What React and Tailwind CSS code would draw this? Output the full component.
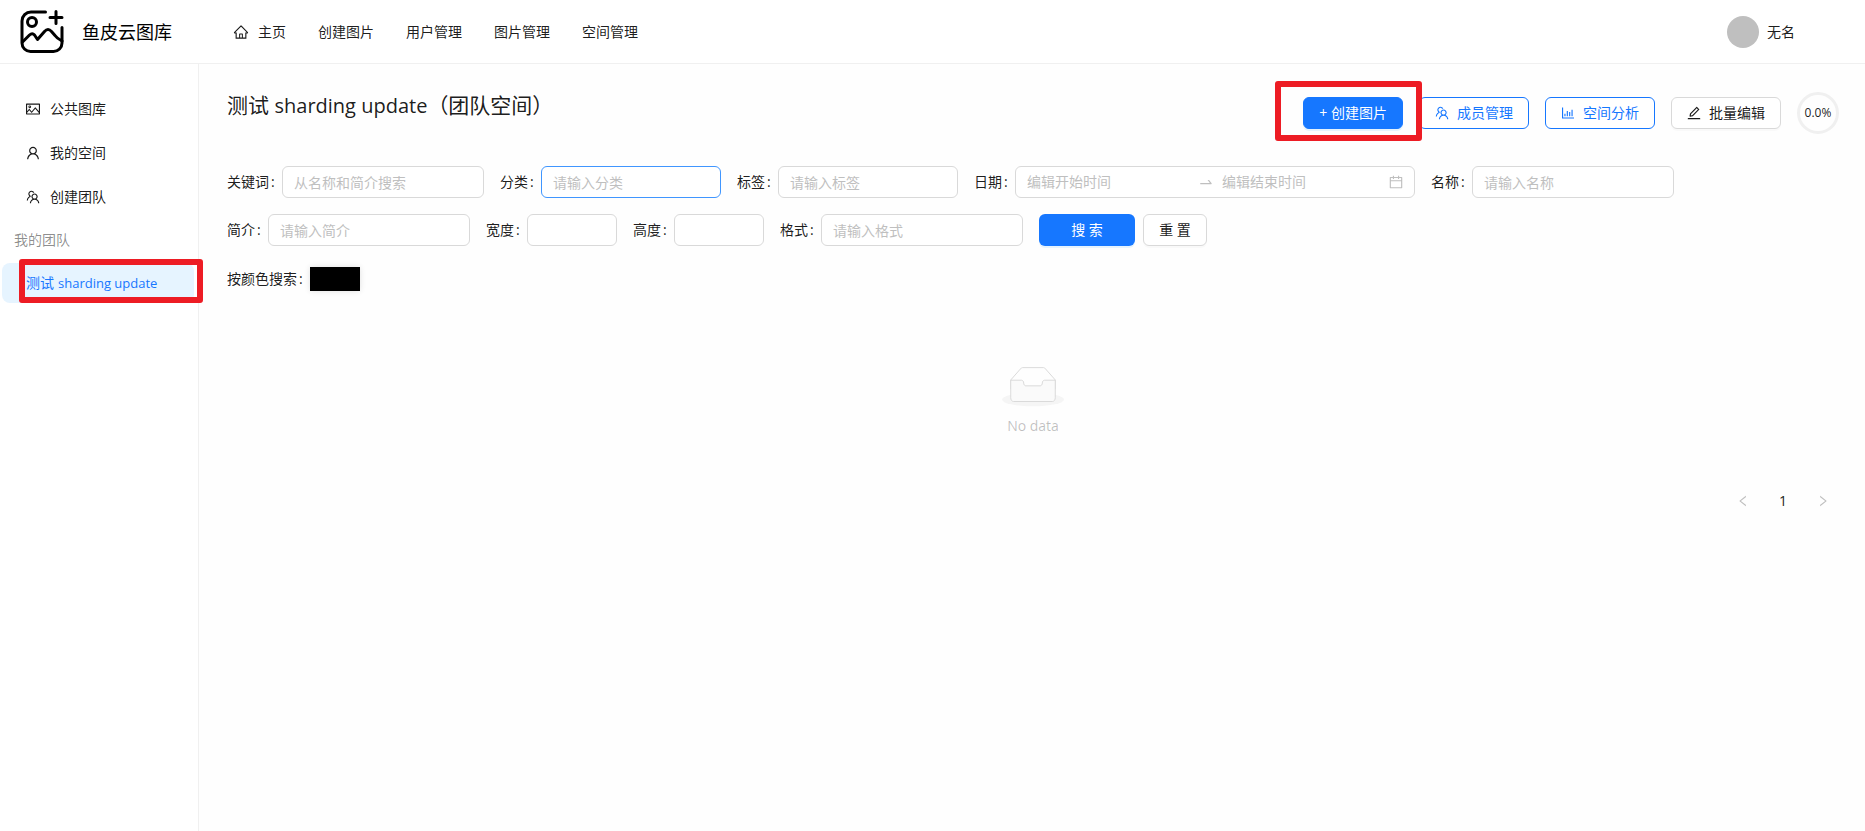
import React, { useState } from 'react';
import {
  AiOutlineBarChart,
  AiOutlineCalendar,
  AiOutlineEdit,
  AiOutlineHome,
  AiOutlineLeft,
  AiOutlinePicture,
  AiOutlineRight,
  AiOutlineSwapRight,
  AiOutlineTeam,
  AiOutlineUser,
} from 'react-icons/ai';

const NAV_ITEMS = ['创建图片', '用户管理', '图片管理', '空间管理'];

const SIDE_ITEMS = [
  { label: '公共图库', icon: AiOutlinePicture },
  { label: '我的空间', icon: AiOutlineUser },
  { label: '创建团队', icon: AiOutlineTeam },
];

const INPUT =
  'h-8 rounded-md border bg-white px-[11px] text-sm text-black/90 outline-none placeholder:text-[#bfbfbf]';

const ICON = '-mx-px size-4 shrink-0';

// ─── Логотип ──────────────────────────────────────────────────────────────────
function Logo() {
  return (
    <svg className="size-11" viewBox="0 0 44 44" fill="none" stroke="#000" strokeWidth="3" strokeLinecap="round" strokeLinejoin="round">
      <path d="M25.500 2H11A9 9 0 0 0 2 11V33A8.500 8.500 0 0 0 10.500 41.500H33.500A8.500 8.500 0 0 0 42 33V17.500" />
      <circle cx="12" cy="12" r="4.500" />
      <path d="M36 1.500v12M30 7.500h12" />
      <path d="M2.500 32l7-7q2.800-2.500 5 0l3 4.500 7-8q3.500-4 7 0l3.500 4q2 3 7 5.500" />
    </svg>
  );
}

// ─── Красная рамка-выделение ──────────────────────────────────────────────────
function Mark({ className }) {
  return <span className={`pointer-events-none absolute z-10 rounded-[3px] border-[6px] border-[#ed1c24] ${className}`} />;
}

// ─── Поле формы ───────────────────────────────────────────────────────────────
function Field({ id, label, children }) {
  return (
    <div className="flex items-center">
      <label htmlFor={id} className="flex">
        {label}
        <span className="ml-[2px] w-[11px]">:</span>
      </label>
      {children}
    </div>
  );
}

function TextField({ id, label, placeholder, width = 'w-[202px]', active }) {
  return (
    <Field id={id} label={label}>
      <input
        id={id}
        type="text"
        placeholder={placeholder}
        className={`${INPUT} ${width} ${active ? 'border-[#4096ff]' : 'border-[#d9d9d9]'}`}
      />
    </Field>
  );
}

function Header() {
  return (
    <header className="flex h-16 items-center border-b border-[#f0f0f0] bg-white pl-5 pr-[70px]">
      <a href="#home" className="flex w-[198px] items-center gap-[18px]">
        <Logo />
        <span className="text-lg text-black">鱼皮云图库</span>
      </a>
      <nav className="flex flex-1">
        <a href="#home" className="flex items-center gap-[10px] px-4">
          <AiOutlineHome className={ICON} /> 主页
        </a>
        {NAV_ITEMS.map((item) => (
          <a key={item} href="#nav" className="px-4">{item}</a>
        ))}
      </nav>
      <a href="#user" className="flex items-center gap-2">
        <span className="size-8 rounded-full bg-[#bfbfbf]" />
        无名
      </a>
    </header>
  );
}

function Sidebar() {
  return (
    <aside className="w-[199px] shrink-0 border-r border-[#f0f0f0] bg-white pt-[25px]">
      <nav className="flex flex-col gap-1 pl-[2px] pr-1">
        {SIDE_ITEMS.map(({ label, icon: Icon }) => (
          <a key={label} href="#side" className="flex h-10 items-center gap-[10px] rounded-lg px-6">
            <Icon className={ICON} /> {label}
          </a>
        ))}
        <p className="px-3 py-2 leading-[22px] text-black/45">我的团队</p>
        <a href="#team" className="relative flex h-10 items-center gap-1 rounded-lg bg-[#e6f4ff] px-6 text-[#1677ff]">
          测试 <span className="text-[13px]">sharding update</span>
          <Mark className="-right-[9px] -top-1 bottom-0 left-[17px]" />
        </a>
      </nav>
    </aside>
  );
}

function SpaceActions() {
  const button = 'flex h-8 items-center gap-2 rounded-md border px-[15px]';
  return (
    <div className="flex items-center gap-4">
      <div className="relative">
        <button type="button" className={`${button} border-[#1677ff] bg-[#1677ff] text-white shadow-[0_2px_0_rgba(5,145,255,0.1)]`}>
          + 创建图片
        </button>
        <Mark className="-left-7 -right-[19px] -top-4 -bottom-3" />
      </div>
      <button type="button" className={`${button} border-[#1677ff] bg-white text-[#1677ff]`}>
        <AiOutlineTeam className={ICON} /> 成员管理
      </button>
      <button type="button" className={`${button} border-[#1677ff] bg-white text-[#1677ff]`}>
        <AiOutlineBarChart className={ICON} /> 空间分析
      </button>
      <button type="button" className={`${button} border-[#d9d9d9] bg-white shadow-[0_2px_0_rgba(0,0,0,0.02)]`}>
        <AiOutlineEdit className={ICON} /> 批量编辑
      </button>
      <div className="flex size-[42px] items-center justify-center rounded-full border-[3px] border-[#f0f0f0] text-xs">0.0%</div>
    </div>
  );
}

function SearchForm() {
  return (
    <form className="mt-8 flex flex-wrap gap-4" onSubmit={(e) => e.preventDefault()}>
      <TextField id="keyword" label="关键词" placeholder="从名称和简介搜索" />
      <TextField id="category" label="分类" placeholder="请输入分类" width="w-[180px]" active />
      <TextField id="tags" label="标签" placeholder="请输入标签" width="w-[180px]" />
      <Field id="start" label="日期">
        <div className="flex h-8 w-[400px] items-center rounded-md border border-[#d9d9d9] bg-white px-[11px] text-[#bfbfbf]">
          <input id="start" type="text" placeholder="编辑开始时间" className="w-0 flex-1 outline-none placeholder:text-[#bfbfbf]" />
          <AiOutlineSwapRight className="mx-2 size-4" />
          <input type="text" aria-label="编辑结束时间" placeholder="编辑结束时间" className="w-0 flex-1 outline-none placeholder:text-[#bfbfbf]" />
          <span className="ml-1">
            <AiOutlineCalendar className={ICON} />
          </span>
        </div>
      </Field>
      <TextField id="name" label="名称" placeholder="请输入名称" />
      <TextField id="intro" label="简介" placeholder="请输入简介" />
      <TextField id="width" label="宽度" width="w-[90px]" />
      <TextField id="height" label="高度" width="w-[90px]" />
      <TextField id="format" label="格式" placeholder="请输入格式" />
      <div className="flex gap-2">
        <button type="submit" className="h-8 w-24 rounded-md bg-[#1677ff] text-white shadow-[0_2px_0_rgba(5,145,255,0.1)]">搜 索</button>
        <button type="reset" className="h-8 w-16 rounded-md border border-[#d9d9d9] bg-white shadow-[0_2px_0_rgba(0,0,0,0.02)]">重 置</button>
      </div>
    </form>
  );
}

function Empty() {
  return (
    <div className="mt-[75px] flex flex-col items-center gap-2 text-black/25">
      <svg width="62" height="41" viewBox="0 0 64 41">
        <g transform="translate(0 1)" fill="none" fillRule="evenodd">
          <ellipse fill="#f5f5f5" cx="32" cy="33" rx="32" ry="7" />
          <g fillRule="nonzero" stroke="#d9d9d9">
            <path d="M55 12.76L44.854 1.258C44.367.474 43.656 0 42.907 0H21.093c-.749 0-1.460.474-1.947 1.257L9 12.761V22h46v-9.240z" />
            <path d="M41.613 15.931c0-1.605.994-2.930 2.227-2.931H55v18.137C55 33.260 53.680 35 52.050 35h-40.100C10.320 35 9 33.259 9 31.137V13h11.160c1.233 0 2.227 1.323 2.227 2.928v.022c0 1.605 1.005 2.901 2.237 2.901h14.752c1.232 0 2.237-1.308 2.237-2.913v-.007z" fill="#fafafa" />
          </g>
        </g>
      </svg>
      <p className="leading-[22px]">No data</p>
    </div>
  );
}

// ─── Главный компонент ────────────────────────────────────────────────────────
export default function App() {
  const [page] = useState(1);
  return (
    <div className="flex min-h-screen flex-col bg-[#fefefe] font-['Open_Sans','Noto_Sans_CJK_SC',sans-serif] text-sm leading-[22px] text-black/90">
      <Header />
      <div className="flex flex-1">
        <Sidebar />
        <main className="min-w-0 flex-1 pb-6 pl-7 pr-[26px] pt-7">
          <div className="flex items-start justify-between">
            <h2 className="text-[21px] leading-[26px]">
              测试 <span className="text-xl leading-[26px]">sharding update</span>（团队空间）
            </h2>
            <SpaceActions />
          </div>
          <SearchForm />
          <div className="mt-[21px] flex items-center">
            <label htmlFor="color" className="flex">
              按颜色搜索
              <span className="ml-[2px] w-[11px]">:</span>
            </label>
            <input
              id="color"
              type="color"
              defaultValue="#000000"
              className="h-6 w-[50px] appearance-none bg-black p-0 shadow-[0_0_6px_rgba(0,0,0,0.12)] [&::-webkit-color-swatch]:border-0 [&::-webkit-color-swatch-wrapper]:p-0"
            />
          </div>
          <Empty />
          <div className="mt-12 flex justify-end gap-2">
            <button type="button" disabled aria-label="prev" className="flex size-8 items-center justify-center text-sm text-black/25">
              <AiOutlineLeft />
            </button>
            <button type="button" className="size-8">{page}</button>
            <button type="button" disabled aria-label="next" className="flex size-8 items-center justify-center text-sm text-black/25">
              <AiOutlineRight />
            </button>
          </div>
        </main>
      </div>
    </div>
  );
}
